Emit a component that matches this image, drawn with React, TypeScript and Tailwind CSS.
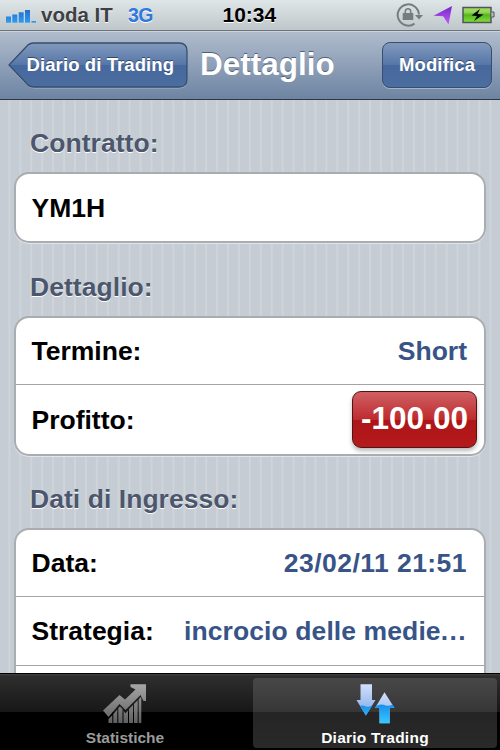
import type { ReactNode } from 'react';

interface RowProps {
  label: string;
  children?: ReactNode;
}

const STRIPES =
  'bg-[repeating-linear-gradient(90deg,#c5ccd3_0px,#c5ccd3_7.9px,#ced4da_8.9px,#ced4da_9.9px,#c5ccd3_10.93px)]';

function StatusBar() {
  return (
    <div className="flex h-[31px] shrink-0 items-center border-b border-[#6b737c] bg-gradient-to-b from-[#dfe6e8] to-[#bfc7ca] pl-[6px] pr-[5px] text-[20.5px] font-bold">
      <svg width="31" height="16" viewBox="0 0 31 16" className="shrink-0">
        <defs>
          <linearGradient id="signal" x1="0" y1="0" x2="0" y2="16" gradientUnits="userSpaceOnUse">
            <stop offset="0" stopColor="#1f63c4" />
            <stop offset="1" stopColor="#2f9df2" />
          </linearGradient>
        </defs>
        <g fill="url(#signal)">
          <rect x="0" y="9.500" width="5" height="6.200" />
          <rect x="6.300" y="7.500" width="5" height="8.200" />
          <rect x="12.700" y="5.300" width="5" height="10.400" />
          <rect x="19" y="3" width="5" height="12.700" />
          <rect x="25.500" y="14" width="4.500" height="1.700" />
        </g>
      </svg>
      <span className="ml-1 w-[87px] whitespace-nowrap text-[#3c4043] [text-shadow:0_1px_0_#fff]">voda IT</span>
      <span className="w-[94.5px] pt-[2px] text-[19.5px] tracking-[-0.5px] text-[#2f78dc] [text-shadow:0_1px_0_#fff]">
        3G
      </span>
      <span className="text-[21px] text-black [text-shadow:0_1px_0_#fff]">10:34</span>
      <div className="ml-auto flex items-center">
        <svg width="28" height="26" viewBox="0 0 28 26" fill="none" stroke="#777c80" strokeWidth="2">
          <path d="M18.500 21.600A10.600 10.600 0 1 1 22.900 12.500" />
          <path d="M19 13h8l-4 4.500z" fill="#777c80" stroke="none" />
          <path d="M9.300 11.500V9.500a2.700 2.700 0 0 1 5.400 0v2" strokeWidth="1.600" />
          <path d="M6.700 11h10.600v7H6.700z" fill="#777c80" stroke="none" />
        </svg>
        <svg width="20" height="20" viewBox="0 0 20 20" className="ml-[9px]">
          <defs>
            <linearGradient id="location" x1="0" y1="0" x2="0" y2="1">
              <stop offset="0" stopColor="#7526ca" />
              <stop offset="1" stopColor="#c05cf5" />
            </linearGradient>
          </defs>
          <path d="M19 1L.5 10.700l9.700.6L15.500 19.500z" fill="url(#location)" />
        </svg>
        <svg width="33" height="18" viewBox="0 0 33 18" className="ml-[9px]">
          <defs>
            <linearGradient id="battery" x1="0" y1="0" x2="0" y2="1">
              <stop offset="0" stopColor="#a4d968" />
              <stop offset=".3" stopColor="#95d856" />
              <stop offset=".5" stopColor="#57b422" />
              <stop offset="1" stopColor="#83e239" />
            </linearGradient>
          </defs>
          <rect x="1" y="1.500" width="28" height="15" fill="url(#battery)" stroke="#50565a" strokeWidth="1.500" />
          <path d="M29.500 6h2.500v5h-2.500" fill="#bbb" stroke="#50565a" />
          <path d="M18 3l-8.500 6.500 5.500.6-3 4.900 9.500-6.500-6-.6z" fill="#000" />
        </svg>
      </div>
    </div>
  );
}

function NavBar() {
  return (
    <header className="flex h-[69px] shrink-0 items-start border-b border-t border-b-[#2d3642] border-t-[#cdd5df] bg-gradient-to-b from-[#b0bccd] to-[#6d84a2] px-[8px] pt-[10px] font-bold text-white">
      <button className="relative h-[47px] w-[180px]">
        <svg width="180" height="47" viewBox="0 0 180 47" className="absolute inset-0">
          <defs>
            <linearGradient id="back" x1="0" y1="0" x2="0" y2="1">
              <stop offset="0" stopColor="#8299bd" />
              <stop offset=".5" stopColor="#5576a7" />
              <stop offset=".51" stopColor="#46689d" />
              <stop offset="1" stopColor="#4c6d9f" />
            </linearGradient>
          </defs>
          <path d="M26 2h145q8 0 8 8v28q0 8-8 8H26q-5 0-8-4L1 24 18 6q3-4 8-4z" fill="none" stroke="#a4b4c9" />
          <path d="M26 1h145q8 0 8 8v28q0 8-8 8H26q-5 0-8-4L1 23 18 5q3-4 8-4z" fill="url(#back)" stroke="#364e70" strokeWidth="1.300" />
        </svg>
        <span className="absolute left-[18.5px] top-[9px] whitespace-nowrap text-[18.5px] leading-[28px] tracking-[0.1px] [text-shadow:0_-1px_0_#34496c]">
          Diario di Trading
        </span>
      </button>
      <h1 className="ml-[12px] whitespace-nowrap text-[31.5px] leading-[44px] [text-shadow:0_-1px_0_#4f5f75]">
        Dettaglio
      </h1>
      <button className="ml-auto h-[46px] w-[110px] rounded-[8px] border border-[#364e70] bg-[linear-gradient(#8299bd,#5576a7_50%,#46689d_51%,#4c6d9f)] text-[18.5px] tracking-[0.15px] shadow-[0_1px_0_#a4b4c9] [text-shadow:0_-1px_0_#34496c]">
        Modifica
      </button>
    </header>
  );
}

function GroupTitle({ children }: { children: ReactNode }) {
  return (
    <h2 className="h-[73px] shrink-0 whitespace-nowrap pl-[16px] pt-[28px] text-[26.5px] font-bold leading-[32px] tracking-[0.05px] text-[#4c566c] [text-shadow:0_1px_0_#fff] first:h-[72px] first:pt-[27px] last-of-type:h-[72px] last-of-type:pt-[27px]">
      {children}
    </h2>
  );
}

function Group({ children }: { children: ReactNode }) {
  return (
    <div className="shrink-0 divide-y divide-[#a2a4a6] rounded-[15px] border-2 border-[#a9adb1] bg-white shadow-[0_1px_0_#e2e6ea]">
      {children}
    </div>
  );
}

function Row({ label, children }: RowProps) {
  return (
    <div className="flex h-[69px] items-center justify-between whitespace-nowrap pl-[15.5px] pr-[17px] text-[26.5px] font-bold text-black first:h-[67px]">
      <span className="pt-[2px]">{label}</span>
      {children}
    </div>
  );
}

function TabBar() {
  return (
    <nav className="flex h-[77px] shrink-0 border-t border-black bg-[linear-gradient(#434343_0px,#2e2e2e_2px,#171717_38px,#000_38px)] text-[15.5px] font-bold leading-[18px]">
      <div className="flex w-[250px] flex-col items-center pt-[9px] text-[#9b9b9b]">
        <svg width="44" height="42" viewBox="0 0 44 42">
          <defs>
            <linearGradient id="stats" x1="0" y1="0" x2="0" y2="42" gradientUnits="userSpaceOnUse">
              <stop offset="0" stopColor="#a8a8a8" />
              <stop offset="1" stopColor="#5c5c5c" />
            </linearGradient>
          </defs>
          <g fill="url(#stats)">
            <path d="M0 27.500L16.500 12l5.500 4.500L32.500 6.500 27.500 4V1.300H43V18h-2.500L37.500 12 22.500 27 16.500 21 5.500 34z" />
            <path d="M5.500 36l3.800-3.800V40H5.500zM10.300 31l4-4.500v13.500h-4zM15.300 25l1.700-1.500 2.500 2.500v14h-4.200zM20.500 28l2 2 2.500-2.500V40h-4.500zM26 26l4-4v18h-4zM31 21l3.700-3.700V40H31zM35.700 16.300l2.600-2.600V40h-2.600z" />
          </g>
        </svg>
        <span className="mt-[4px]">Statistiche</span>
      </div>
      <div className="ml-[3px] mt-[4px] flex h-[70px] w-[244px] flex-col items-center rounded-[4px] bg-[linear-gradient(#484848,#363636_34px,#252525_34px,#292929)] pt-[5px] text-white">
        <svg width="40" height="42" viewBox="0 0 40 42">
          <defs>
            <linearGradient id="ice" x1="0" y1="0" x2="0" y2="1">
              <stop offset="0" stopColor="#d3e0fb" />
              <stop offset="1" stopColor="#7da9ea" />
            </linearGradient>
            <linearGradient id="water" x1="0" y1="20" x2="0" y2="40" gradientUnits="userSpaceOnUse">
              <stop offset="0" stopColor="#168aea" />
              <stop offset="1" stopColor="#36c8ff" />
            </linearGradient>
          </defs>
          <path d="M5.500 1.300h11.500v15.700h3.500L10.900 32.500 1.500 17h4z" fill="url(#ice)" />
          <path d="M5 22.800q3-1 6 .6 3 1 6.300-.8L10.900 32.500z" fill="url(#water)" />
          <path d="M29.500 9.300L39.500 25h-4.800v15.300H24.500V25h-4.500z" fill="url(#ice)" />
          <path d="M21.500 22.700q5-2 8.500-.5 4 1.500 7.300-.7l2.200 3.500h-4.800v15.300H24.500V25h-4.500z" fill="url(#water)" />
        </svg>
        <span className="mt-[4px] tracking-[0.25px]">Diario Trading</span>
      </div>
    </nav>
  );
}

export default function App() {
  return (
    <div className="flex h-[750px] w-[500px] flex-col overflow-hidden bg-black font-['Liberation_Sans',Arial,sans-serif]">
      <StatusBar />
      <NavBar />
      <main className={`flex min-h-0 flex-1 flex-col overflow-hidden px-[14px] ${STRIPES}`}>
        <GroupTitle>Contratto:</GroupTitle>
        <Group>
          <Row label="YM1H" />
        </Group>
        <GroupTitle>Dettaglio:</GroupTitle>
        <Group>
          <Row label="Termine:">
            <span className="pt-[2px] text-[#385487]">Short</span>
          </Row>
          <Row label="Profitto:">
            <span className="mr-[-10px] flex h-[57px] w-[125px] items-center justify-center rounded-[9px] border border-[#511315] bg-[linear-gradient(#d06064,#bd2b2e_50%,#ad1518_51%,#b51a1c)] pb-[2px] text-[31.5px] text-white shadow-[0_3px_4px_#bbb]">
              -100.00
            </span>
          </Row>
        </Group>
        <GroupTitle>Dati di Ingresso:</GroupTitle>
        <Group>
          <Row label="Data:">
            <span className="pt-[2px] tracking-[0.45px] text-[#385487]">23/02/11 21:51</span>
          </Row>
          <Row label="Strategia:">
            <span className="pt-[2px] tracking-[0.1px] text-[#385487]">
              incrocio delle medie<span className="tracking-[1.4px]">...</span>
            </span>
          </Row>
          <Row label="" />
        </Group>
      </main>
      <TabBar />
    </div>
  );
}
